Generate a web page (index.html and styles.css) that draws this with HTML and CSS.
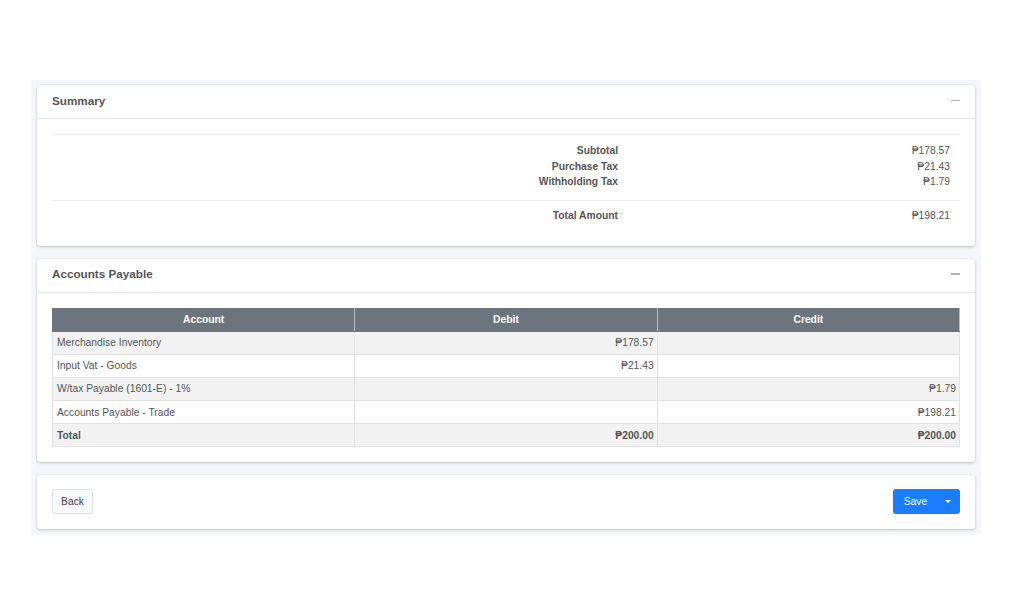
FILE: index.html
```html
<!DOCTYPE html>
<html>
<head>
<meta charset="utf-8">
<link rel="stylesheet" href="styles.css">
</head>
<body>
<div class="page">
  <div class="card">
    <div class="card-header">
      <h3 class="card-title">Summary</h3>
      <span class="minus"></span>
    </div>
    <div class="card-body summary-body">
      <div class="summary-group">
        <div class="srow"><span class="slabel">Subtotal</span><span class="svalue">₱178.57</span></div>
        <div class="srow"><span class="slabel">Purchase Tax</span><span class="svalue">₱21.43</span></div>
        <div class="srow"><span class="slabel">Withholding Tax</span><span class="svalue">₱1.79</span></div>
      </div>
      <div class="summary-group total-group">
        <div class="srow"><span class="slabel">Total Amount</span><span class="svalue">₱198.21</span></div>
      </div>
    </div>
  </div>

  <div class="card">
    <div class="card-header">
      <h3 class="card-title">Accounts Payable</h3>
      <span class="minus"></span>
    </div>
    <div class="card-body">
      <table class="ledger">
        <thead>
          <tr><th>Account</th><th>Debit</th><th>Credit</th></tr>
        </thead>
        <tbody>
          <tr><td>Merchandise Inventory</td><td class="num">₱178.57</td><td class="num"></td></tr>
          <tr><td>Input Vat - Goods</td><td class="num">₱21.43</td><td class="num"></td></tr>
          <tr><td>W/tax Payable (1601-E) - 1%</td><td class="num"></td><td class="num">₱1.79</td></tr>
          <tr><td>Accounts Payable - Trade</td><td class="num"></td><td class="num">₱198.21</td></tr>
          <tr class="total"><td>Total</td><td class="num">₱200.00</td><td class="num">₱200.00</td></tr>
        </tbody>
      </table>
    </div>
  </div>

  <div class="card last">
    <div class="card-body actions">
      <button class="btn btn-back">Back</button>
      <div class="btn-split">
        <button class="btn btn-save">Save</button>
        <button class="btn btn-caret"><span class="caret"></span></button>
      </div>
    </div>
  </div>
</div>
</body>
</html>
```

FILE: styles.css
```css
* { box-sizing: border-box; }
html, body { margin: 0; padding: 0; background: #fff; }
body {
  font-family: "Liberation Sans", Arial, Helvetica, sans-serif;
  font-size: 10.3px;
  color: #555;
}
.page {
  margin: 80px 0 0 31px;
  width: 950px;
  background: #f4f6f9;
  padding: 5px 6px 6px;
}
.card {
  background: #fff;
  border-radius: 3px;
  box-shadow: 0 0 1px rgba(0,0,0,.125), 0 1px 3px rgba(0,0,0,.2);
  margin-bottom: 12.5px;
}
.card.last { margin-bottom: 0; }
.card-header {
  display: flex;
  align-items: center;
  justify-content: space-between;
  height: 34px;
  padding: 0 15px 3px;
  border-bottom: 1px solid #e5e7ea;
}
.card-title {
  margin: 0;
  font-size: 11.7px;
  font-weight: bold;
  color: #555;
}
.minus {
  display: block;
  width: 9.5px;
  height: 1.5px;
  background: #adb5bd;
  margin-top: 1px;
}
.card-body { padding: 15px; }
.summary-body { padding: 15px 15px 15px; }
.summary-group {
  border-top: 1px solid #e9ecef;
  padding: 8px 0 10px;
}
.total-group { padding: 7px 0 8px; }
.srow {
  display: grid;
  grid-template-columns: 566px 1fr;
  line-height: 15.5px;
}
.slabel { text-align: right; font-weight: bold; color: #555; }
.svalue { text-align: right; padding-right: 10px; color: #555; }

.ledger {
  width: 100%;
  border-collapse: collapse;
  table-layout: fixed;
}
.ledger th, .ledger td {
  border: 1px solid #dee2e6;
  line-height: 15px;
  padding: 4px 4px;
}
.ledger th {
  background: #6c757d;
  color: #fff;
  font-weight: bold;
  text-align: center;
  padding: 3.5px 4px;
  border-color: #6c757d #b7bec4;
  border-left: 1px solid #c1c7cc;
}
.ledger th:first-child { border-left-color: #6c757d; }
.ledger td { color: #555; height: 23.2px; padding: 0 3px 0 4px; }
.ledger tbody tr:nth-child(odd) td { background: #f2f2f2; }
.ledger .num { text-align: right; }
.ledger .total td { font-weight: bold; }

.actions {
  display: flex;
  justify-content: space-between;
  align-items: center;
  padding: 14.5px 15px;
}
.btn {
  font-family: inherit;
  font-size: 10.3px;
  height: 25px;
  border-radius: 3px;
  cursor: pointer;
}
.btn-back {
  width: 41px;
  background: #f8f9fa;
  border: 1px solid #e2e4e7;
  color: #444;
  padding: 0;
}
.btn-split { display: flex; }
.btn-save {
  width: 43px;
  background: #1a7cff;
  border: none;
  color: #fff;
  border-radius: 3px 0 0 3px;
  padding: 0 0 0 2px;
}
.btn-caret {
  width: 24px;
  background: #1a7cff;
  border: none;
  border-radius: 0 3px 3px 0;
  display: flex;
  align-items: center;
  justify-content: center;
  padding: 0 0 1px 0;
}
.caret {
  width: 0;
  height: 0;
  border-left: 3px solid transparent;
  border-right: 3px solid transparent;
  border-top: 3px solid #fff;
}
```
